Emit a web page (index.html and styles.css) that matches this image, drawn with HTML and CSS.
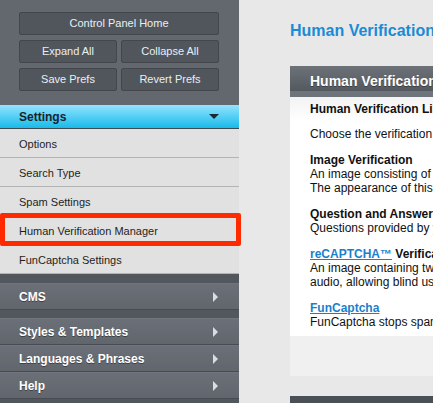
FILE: index.html
```html
<!DOCTYPE html>
<html>
<head>
<meta charset="utf-8">
<link rel="stylesheet" href="styles.css">
</head>
<body>
<aside class="sidebar">
  <div class="tools">
    <button class="btn wide">Control Panel Home</button>
    <button class="btn">Expand All</button>
    <button class="btn">Collapse All</button>
    <button class="btn">Save Prefs</button>
    <button class="btn">Revert Prefs</button>
  </div>
  <div class="group-open">
    <div class="head-open"><span>Settings</span><span class="caret-down"></span></div>
    <ul class="items">
      <li>Options</li>
      <li>Search Type</li>
      <li>Spam Settings</li>
      <li class="marked">Human Verification Manager<span class="redbox"></span></li>
      <li>FunCaptcha Settings</li>
    </ul>
  </div>
  <div class="group">
    <div class="bar"><span>CMS</span><span class="caret-right"></span></div>
  </div>
  <div class="group">
    <div class="bar"><span>Styles &amp; Templates</span><span class="caret-right"></span></div>
    <div class="bar"><span>Languages &amp; Phrases</span><span class="caret-right"></span></div>
    <div class="bar"><span>Help</span><span class="caret-right"></span></div>
  </div>
</aside>
<main class="main">
  <h1 class="title">Human Verification Manager</h1>
  <section class="panel">
    <div class="panel-head">Human Verification Manager</div>
    <div class="panel-band"></div>
    <div class="panel-sub">Human Verification Library</div>
    <div class="panel-body">
      <p>Choose the verification method that you would like to use to stop spam bots.</p>
      <p><b>Image Verification</b><br>An image consisting of letters in varying fonts/shapes/sizes will be shown.<br>The appearance of this image can be customized in the settings.</p>
      <p><b>Question and Answer Verification</b><br>Questions provided by you must be answered correctly.</p>
      <p><b><a href="#">reCAPTCHA™</a> Verification</b><br>An image containing two words will be shown, with an option for<br>audio, allowing blind users to register.</p>
      <p><b><a href="#">FunCaptcha</a></b><br>FunCaptcha stops spam with a fun, simple game.</p>
    </div>
    <div class="panel-foot"></div>
  </section>
  <div class="next-head"></div>
</main>
</body>
</html>
```
FILE: styles.css
```css
* { box-sizing: border-box; }
html, body { margin: 0; padding: 0; }
body {
  width: 433px;
  height: 403px;
  overflow: hidden;
  display: flex;
  font-family: "Liberation Sans", Arial, sans-serif;
  background: #e8e8e8;
}
.sidebar {
  width: 239px;
  flex: 0 0 239px;
  height: 403px;
  background: #52575e;
}
.tools {
  background: #63686f;
  padding: 12px 20px 14px 19px;
  display: grid;
  grid-template-columns: 98px 98px;
  column-gap: 4px;
  row-gap: 5px;
}
.btn {
  height: 23px;
  margin: 0;
  padding: 0;
  background: #51565d;
  border: 1px solid #43474d;
  border-radius: 2px;
  color: #e8eff4;
  font-family: "Liberation Sans", Arial, sans-serif;
  font-size: 11px;
  line-height: 21px;
}
.btn.wide { grid-column: 1 / 3; }
.head-open {
  height: 24px;
  padding: 0 20px 0 19px;
  display: flex;
  align-items: center;
  justify-content: space-between;
  background: linear-gradient(#93e3fc, #56cff5 50%, #18bbea);
  border-bottom: 1px solid #3e4b53;
  color: #16242c;
  font-size: 12px;
  font-weight: bold;
}
.caret-down {
  width: 0; height: 0;
  border-left: 5px solid transparent;
  border-right: 5px solid transparent;
  border-top: 5px solid #1a2a33;
}
.items {
  list-style: none;
  margin: 0;
  padding: 0;
  background: #e1e1e1;
}
.items li {
  position: relative;
  height: 29px;
  line-height: 28px;
  padding: 1px 0 0 19px;
  border-bottom: 1px solid #b3b3b3;
  font-size: 11px;
  color: #1e1e1e;
}
.redbox {
  position: absolute;
  left: 0;
  top: -3px;
  width: 241px;
  height: 33px;
  border: 5px solid #ff2a00;
  border-radius: 2px;
}
.group { margin-top: 9px; }
.group + .group { margin-top: 8px; }
.bar {
  height: 27px;
  padding: 0 21px 0 19px;
  display: flex;
  align-items: center;
  justify-content: space-between;
  background: linear-gradient(#6b7078, #61666d);
  border-top: 1px solid #70757d;
  border-bottom: 1px solid #484c52;
  color: #fff;
  font-size: 12px;
  font-weight: bold;
  text-shadow: 0 1px 0 #3d4146;
}
.caret-right {
  width: 0; height: 0;
  border-top: 5px solid transparent;
  border-bottom: 5px solid transparent;
  border-left: 5px solid #d9dde1;
}
.main {
  flex: 1;
  padding-left: 51px;
  overflow: hidden;
  min-width: 0;
}
.title {
  margin: 21px 0 25px;
  font-size: 16px;
  line-height: 20px;
  font-weight: bold;
  color: #1a8bd6;
  white-space: nowrap;
}
.panel {
  width: 520px;
  white-space: nowrap;
}
.panel-head {
  height: 25px;
  padding: 7px 0 0 20px;
  background: linear-gradient(#6d7279, #54595f);
  color: #fff;
  font-size: 14px;
  line-height: 16px;
  font-weight: bold;
  text-shadow: 0 1px 0 #3a3e43;
}
.panel-band {
  height: 6px;
  background: #6e747b;
}
.panel-sub {
  height: 24px;
  padding-left: 20px;
  line-height: 24px;
  background: linear-gradient(#f3f3f3, #ffffff);
  font-size: 12px;
  font-weight: bold;
  color: #111;
}
.panel-body {
  background: #fff;
  padding: 6px 0 7px 20px;
  font-size: 12px;
  line-height: 14px;
  color: #111;
}
.panel-body p { margin: 0 0 12px; }
.panel-body p:last-child { margin-bottom: 0; }
.panel-body a { color: #1a7fcc; text-decoration: underline; }
.panel-foot {
  height: 40px;
  background: #f0f0f0;
}
.next-head {
  margin-top: 20px;
  width: 520px;
  height: 20px;
  background: #4b5056;
}
```
